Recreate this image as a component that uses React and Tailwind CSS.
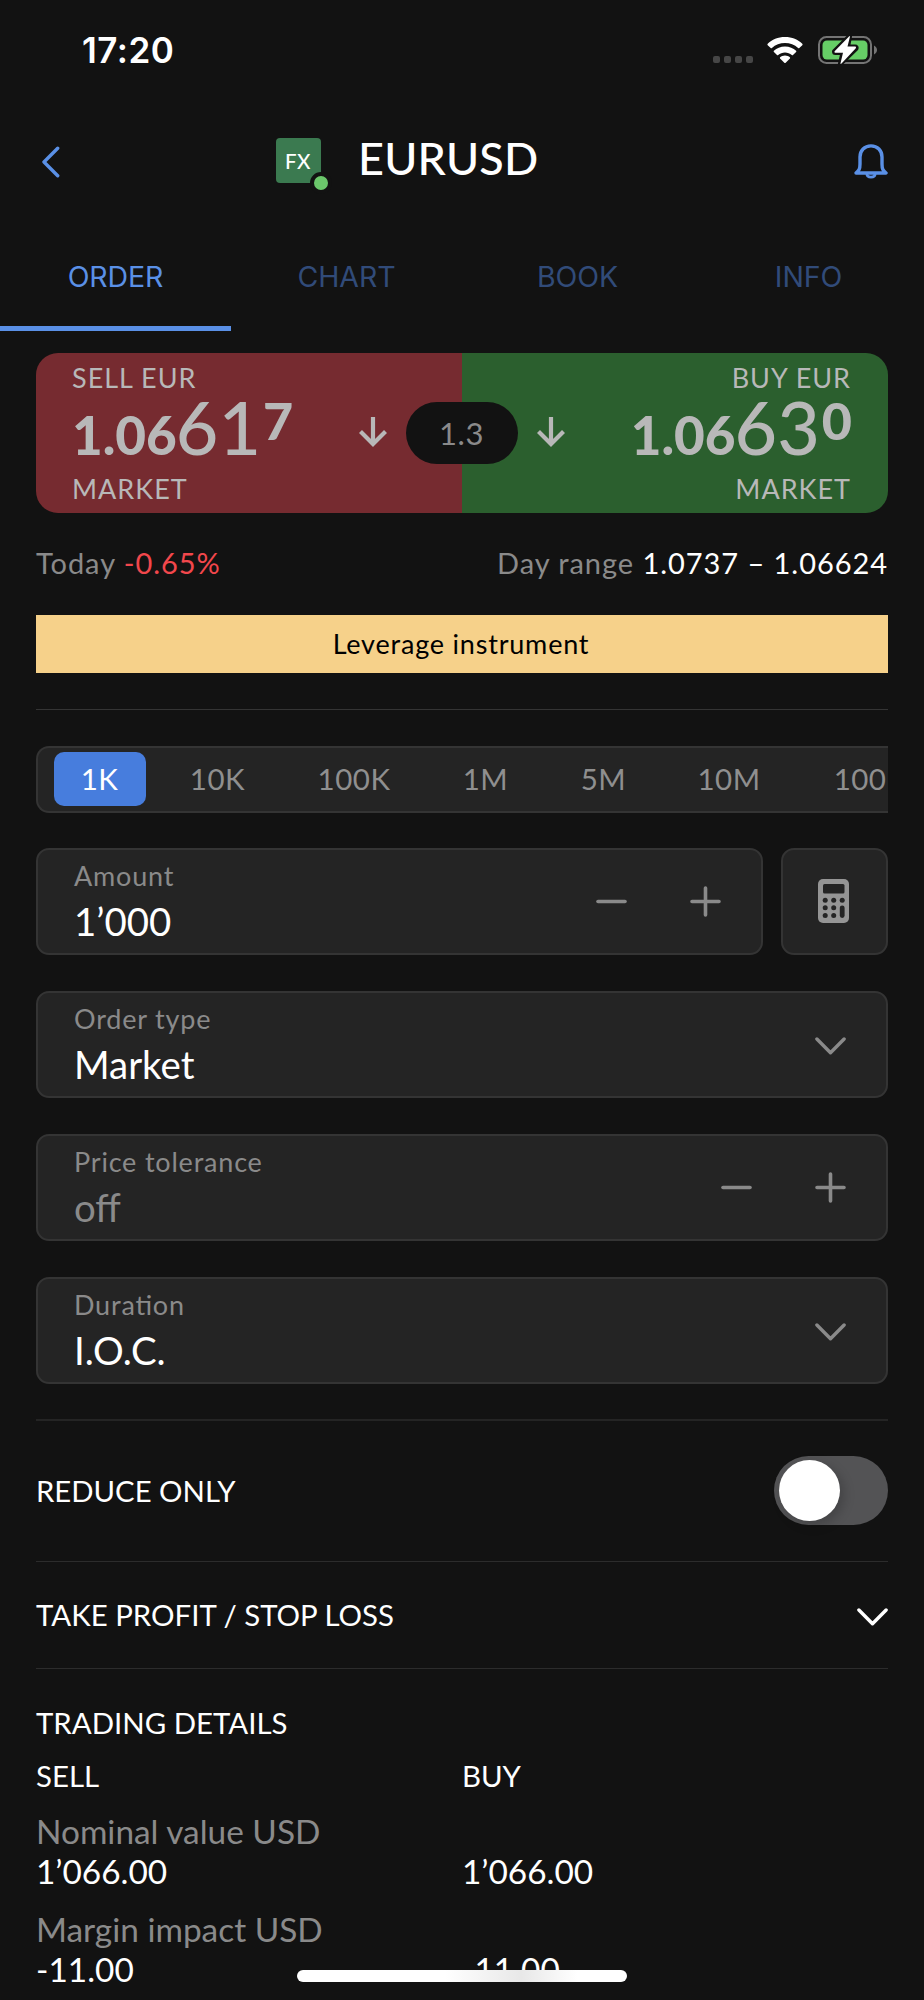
import React, { useState } from "react";
import clsx from "clsx";

const tabs = ["ORDER", "CHART", "BOOK", "INFO"];

const presets = [
  { label: "1K", width: "w-[92px]" },
  { label: "10K", width: "w-[144px]" },
  { label: "100K", width: "w-[129px]" },
  { label: "1M", width: "w-[134px]" },
  { label: "5M", width: "w-[102px]" },
  { label: "10M", width: "w-[149px]" },
  { label: "100M", width: "w-[141px]" },
];

const details = [
  { label: "Nominal value USD", sell: "1’066.00", buy: "1’066.00" },
  { label: "Margin impact USD", sell: "-11.00", buy: "-11.00" },
];

const Chevron = ({ className }) => (
  <svg viewBox="0 0 31 18" className={clsx("w-[31px] h-[18px]", className)} fill="none" stroke="currentColor" strokeWidth="3.4" strokeLinecap="round" strokeLinejoin="round">
    <path d="M1.9 2L15.5 15.8L29.1 2" />
  </svg>
);

const Minus = () => (
  <svg viewBox="0 0 31 31" className="w-[31px] h-[31px]" stroke="currentColor" strokeWidth="3.6" strokeLinecap="round">
    <path d="M2 15.5H29" />
  </svg>
);

const Plus = () => (
  <svg viewBox="0 0 31 31" className="w-[31px] h-[31px]" stroke="currentColor" strokeWidth="3.6" strokeLinecap="round">
    <path d="M2 15.5H29M15.5 2V29" />
  </svg>
);

const ArrowDown = () => (
  <svg viewBox="0 0 28 30" className="w-7 h-[30px] -mt-[3px]" fill="none" stroke="currentColor" strokeWidth="4.2">
    <path d="M14 0V27M1.5 14.5L14 27L26.5 14.5" />
  </svg>
);

const Calculator = () => (
  <svg viewBox="0 0 31 44" className="w-[31px] h-11 -mt-px mr-[2px]">
    <rect width="31" height="44" rx="5" fill="#959595" />
    <g fill="#242424">
      <rect x="5" y="5" width="21.5" height="9.5" rx="1.5" />
      {[21.2, 28.8, 36.5].map((y) => (
        <g key={y}>
          <circle cx="7.2" cy={y} r="2.5" />
          <circle cx="15.7" cy={y} r="2.5" />
        </g>
      ))}
      <circle cx="24.2" cy="21.2" r="2.5" />
      <rect x="21.8" y="26.4" width="4.8" height="12.6" rx="2.4" />
    </g>
  </svg>
);

function StatusBar() {
  return (
    <div className="flex h-[100px] shrink-0 items-center pl-[82px] pr-[47px] text-white">
      <span className="font-['Inter'] text-[35px] font-semibold leading-[40px] tracking-[0.5px]">17:20</span>
      <div className="ml-auto mt-[19px] flex gap-[4px]">
        {[0, 1, 2, 3].map((i) => (
          <span key={i} className="h-[7px] w-[7px] rounded-[2px] bg-[#464646]" />
        ))}
      </div>
      <svg viewBox="0 0 36 27" className="ml-[14px] mr-px h-[27px] w-9" fill="white">
        <path d="M18 0C25 0 31.200 2.700 35.300 6.800Q36 7.500 35.300 8.200L32.300 11.100Q31.700 11.600 31.100 11C27.600 7.800 23 6 18 6C13 6 8.400 7.800 4.900 11Q4.300 11.600 3.700 11.100L.7 8.200Q0 7.500.7 6.800C4.800 2.700 11 0 18 0Z" />
        <path d="M18 9.500C22.500 9.500 26.300 11.200 29.100 13.700Q29.700 14.300 29.100 15L26 18Q25.400 18.500 24.800 18C23 16.400 20.600 15.500 18 15.500C15.400 15.500 13 16.400 11.200 18Q10.600 18.500 10 18L6.900 15Q6.300 14.300 6.900 13.700C9.700 11.200 13.500 9.500 18 9.500Z" />
        <path d="M18 18.500C20 18.500 21.600 19.200 22.900 20.300Q23.500 20.900 22.900 21.600L18.700 25.800Q18 26.400 17.300 25.800L13.100 21.600Q12.500 20.900 13.100 20.300C14.400 19.200 16 18.500 18 18.500Z" />
      </svg>
      <svg viewBox="0 0 59 30" className="ml-[14px] h-[30px] w-[59px]">
        <rect x="1" y="2" width="52" height="26" rx="7.500" fill="none" stroke="#747474" strokeWidth="2" />
        <path d="M56 10.500C60 12.500 60 17.500 56 19.500Z" fill="#747474" />
        <rect x="4.500" y="5.500" width="45" height="19" rx="4.500" fill="#66ce66" />
        <path d="M31.500 1.500L16.500 16.500Q16.500 17.500 17.500 17.500H25L22.500 28.500L38 13.500Q38.500 12 37 12H29.500Z" fill="white" stroke="#121212" strokeWidth="5" strokeLinejoin="round" />
        <path d="M31 1.500Q31.800 .3 32 1.500L29.500 11.500H37.200Q38.600 11.800 37.800 13.200L23.500 28.500Q22.300 29.500 22.500 28.200L25 17.800H17.200Q15.900 17.400 16.600 16.200Z" fill="white" />
      </svg>
    </div>
  );
}

function Header() {
  return (
    <div className="flex h-[124px] shrink-0 items-center pl-[42px] pr-9">
      <svg viewBox="0 0 18 32" className="h-8 w-[18px]" fill="none" stroke="#5a90e6" strokeWidth="3.400" strokeLinecap="round" strokeLinejoin="round">
        <path d="M15.700 2.300L2 16L15.700 29.700" />
      </svg>
      <div className="relative -mt-[3px] ml-[216px] flex h-[45px] w-[45px] items-center justify-center rounded-[4px] bg-[#3b7a50]">
        <span className="mr-px mt-px text-[20.5px] font-medium leading-none tracking-[0.6px] text-white">FX</span>
        <span className="absolute -bottom-[11px] -right-[11px] h-[22px] w-[22px] rounded-full border-4 border-[#121212] bg-[#6bc76b]" />
      </div>
      <h1 className="-mt-2 ml-[37px] text-[45px] font-medium leading-[54px] tracking-[0.2px] text-white">EURUSD</h1>
      <svg viewBox="0 0 34 35" className="-mt-[2px] ml-auto h-[35px] w-[34px]" fill="none" stroke="#5a90e6" strokeWidth="3.400" strokeLinejoin="round" strokeLinecap="round">
        <path d="M2 29C5 26.500 6 25 6 20V13C6 6.500 10.500 1.900 17 1.900S28 6.500 28 13V20C28 25 29 26.500 32 29Z" />
        <path d="M12.800 29.500C13 34.300 21 34.300 21.200 29.500" strokeWidth="2.800" />
      </svg>
    </div>
  );
}

function Price({ base, pips, point }) {
  return (
    <div className="flex h-[60px] items-baseline">
      <span className="text-[53px] font-black leading-[48px]">{base}</span>
      <span className="-ml-px text-[73.5px] font-medium leading-[48px]">{pips}</span>
      <span className="ml-[2px] self-start text-[52px] font-black leading-[34px]">{point}</span>
    </div>
  );
}

function Ticket() {
  return (
    <div className="relative flex h-40 overflow-hidden rounded-[22px] text-[27px] tracking-[1px] text-[#b8b8b8]">
      <button className="flex flex-1 items-center bg-[#762b30] pl-[36px] pr-[75px]">
        <div className="text-left">
          <div className="h-[50px] leading-[50px]">SELL EUR</div>
          <div className="tracking-normal"><Price base="1.06" pips="61" point="7" /></div>
          <div className="h-[50px] leading-[52px]">MARKET</div>
        </div>
        <div className="ml-auto"><ArrowDown /></div>
      </button>
      <button className="flex flex-1 items-center bg-[#2b5f2e] pl-[75px] pr-[36px]">
        <ArrowDown />
        <div className="ml-auto flex flex-col items-end">
          <div className="mr-px h-[50px] leading-[50px]">BUY EUR</div>
          <div className="tracking-normal"><Price base="1.06" pips="63" point="0" /></div>
          <div className="mr-px h-[50px] leading-[52px]">MARKET</div>
        </div>
      </button>
      {/* spread */}
      <div className="absolute left-[370px] top-[49px] flex h-[62px] w-[112px] items-center justify-center rounded-full bg-[#121212] pr-px text-[31px] tracking-[0.5px] text-[#8a8a8a]">
        1.3
      </div>
    </div>
  );
}

function Field({ label, value, muted, className, children }) {
  return (
    <div className={clsx("flex h-[107px] items-center rounded-[13px] border-2 border-[#343434] bg-[#242424] pl-9 text-[#8a8a8a]", className)}>
      <div className="h-full">
        <div className="mt-[8px] h-9 text-[27px] leading-9 tracking-[0.8px] [font-feature-settings:'liga'_1]">{label}</div>
        <div className={clsx("mt-[2px] text-[38.4px] leading-[50px]", muted ? "text-[#8a8a8a]" : "text-white")}>{value}</div>
      </div>
      <div className="ml-auto flex items-center gap-[63px] pr-10">{children}</div>
    </div>
  );
}

export default function App() {
  const [tab, setTab] = useState("ORDER");
  const [preset, setPreset] = useState("1K");
  const [reduceOnly, setReduceOnly] = useState(false);

  return (
    <div className="relative flex h-[2000px] w-[924px] flex-col overflow-hidden bg-[#121212] font-['Lato',sans-serif]">
      <StatusBar />
      <Header />

      <div className="grid h-[107px] shrink-0 grid-cols-4 font-['Inter']">
        {tabs.map((name) => (
          <button
            key={name}
            onClick={() => setTab(name)}
            className={clsx(
              "border-b-[5px] pt-1 text-[28.5px] font-normal tracking-[-0.1px]",
              tab === name ? "border-[#5a90e6] text-[#5a90e6]" : "border-transparent text-[#314b79]"
            )}
          >
            {name}
          </button>
        ))}
      </div>

      <div className="flex flex-col px-9 pt-[22px]">
        <Ticket />

        <div className="mt-[29px] flex h-[42px] justify-between text-[29px] leading-[42px] tracking-[0.95px] text-[#8a8a8a]">
          <span>Today <span className="text-[#f2474c]">-0.65%</span></span>
          <span>Day range <span className="text-white">1.0737 – 1.06624</span></span>
        </div>

        <div className="mt-[31px] h-[58px] bg-[#f6d18a] pr-[2px] text-center text-[27px] leading-[57px] tracking-[0.8px] text-black">
          Leverage instrument
        </div>

        <div className="mt-9 h-px bg-[#343434]" />

        <div className="mt-9 flex h-[67px] items-center overflow-hidden rounded-l-[13px] border-2 border-r-0 border-[#343434] bg-[#242424] pb-[2px] pl-4">
          {presets.map(({ label, width }) => (
            <button
              key={label}
              onClick={() => setPreset(label)}
              className={clsx(
                "h-[54px] shrink-0 rounded-[10px] pr-px pt-[2px] text-[29.5px] tracking-[0.5px]",
                width,
                preset === label ? "bg-[#477ddd] text-white" : "text-[#8f8f8f]"
              )}
            >
              {label}
            </button>
          ))}
        </div>

        <div className="mt-[35px] flex gap-[18px]">
          <Field label="Amount" value="1’000" className="flex-1">
            <Minus />
            <Plus />
          </Field>
          <button className="flex h-[107px] w-[107px] items-center justify-center rounded-[13px] border-2 border-[#343434] bg-[#242424]">
            <Calculator />
          </button>
        </div>

        <Field label="Order type" value="Market" className="mt-9"><Chevron className="mt-[2px]" /></Field>
        <Field label="Price tolerance" value="off" muted className="mt-9">
          <Minus />
          <Plus />
        </Field>
        <Field label="Duration" value="I.O.C." className="mt-9"><Chevron className="mt-[2px]" /></Field>

        <div className="mt-[35px] h-[2px] bg-[#242424]" />

        <div className="flex h-[140px] items-center justify-between pb-[2px] text-[29.3px] text-white">
          <span className="mt-px">REDUCE ONLY</span>
          <button
            onClick={() => setReduceOnly(!reduceOnly)}
            className={clsx("flex h-[69px] w-[114px] items-center rounded-full bg-[#535355] px-[4.5px]", reduceOnly && "justify-end")}
          >
            <span className="h-[61px] w-[61px] rounded-full bg-white shadow-[4px_4px_12px_rgba(0,0,0,0.2)]" />
          </button>
        </div>

        <div className="h-px bg-[#2c2c2c]" />

        <div className="flex h-[106px] items-center justify-between pt-px text-[29.4px] text-white">
          <span>TAKE PROFIT / STOP LOSS</span>
          <Chevron className="mt-[3px]" />
        </div>

        <div className="h-px bg-[#2c2c2c]" />

        <div className="mt-[32px] text-[29.4px] leading-[44px] text-white">TRADING DETAILS</div>
        <div className="mt-[9px] grid grid-cols-2 text-[29.4px] leading-[44px] text-white">
          <span>SELL</span>
          <span>BUY</span>
        </div>

        {details.map((row) => (
          <div key={row.label} className="mt-[13px] grid h-[85px] grid-cols-2 content-start text-[33.4px] leading-[40px] text-white">
            <div className="col-span-2 text-[#8a8a8a]">{row.label}</div>
            <span>{row.sell}</span>
            <span>{row.buy}</span>
          </div>
        ))}
      </div>

      {/* home indicator */}
      <div className="absolute left-[297px] top-[1970px] h-3 w-[330px] rounded-full bg-gradient-to-r from-white from-45% via-[#e8e8e8] via-68% to-white to-85%" />
    </div>
  );
}
